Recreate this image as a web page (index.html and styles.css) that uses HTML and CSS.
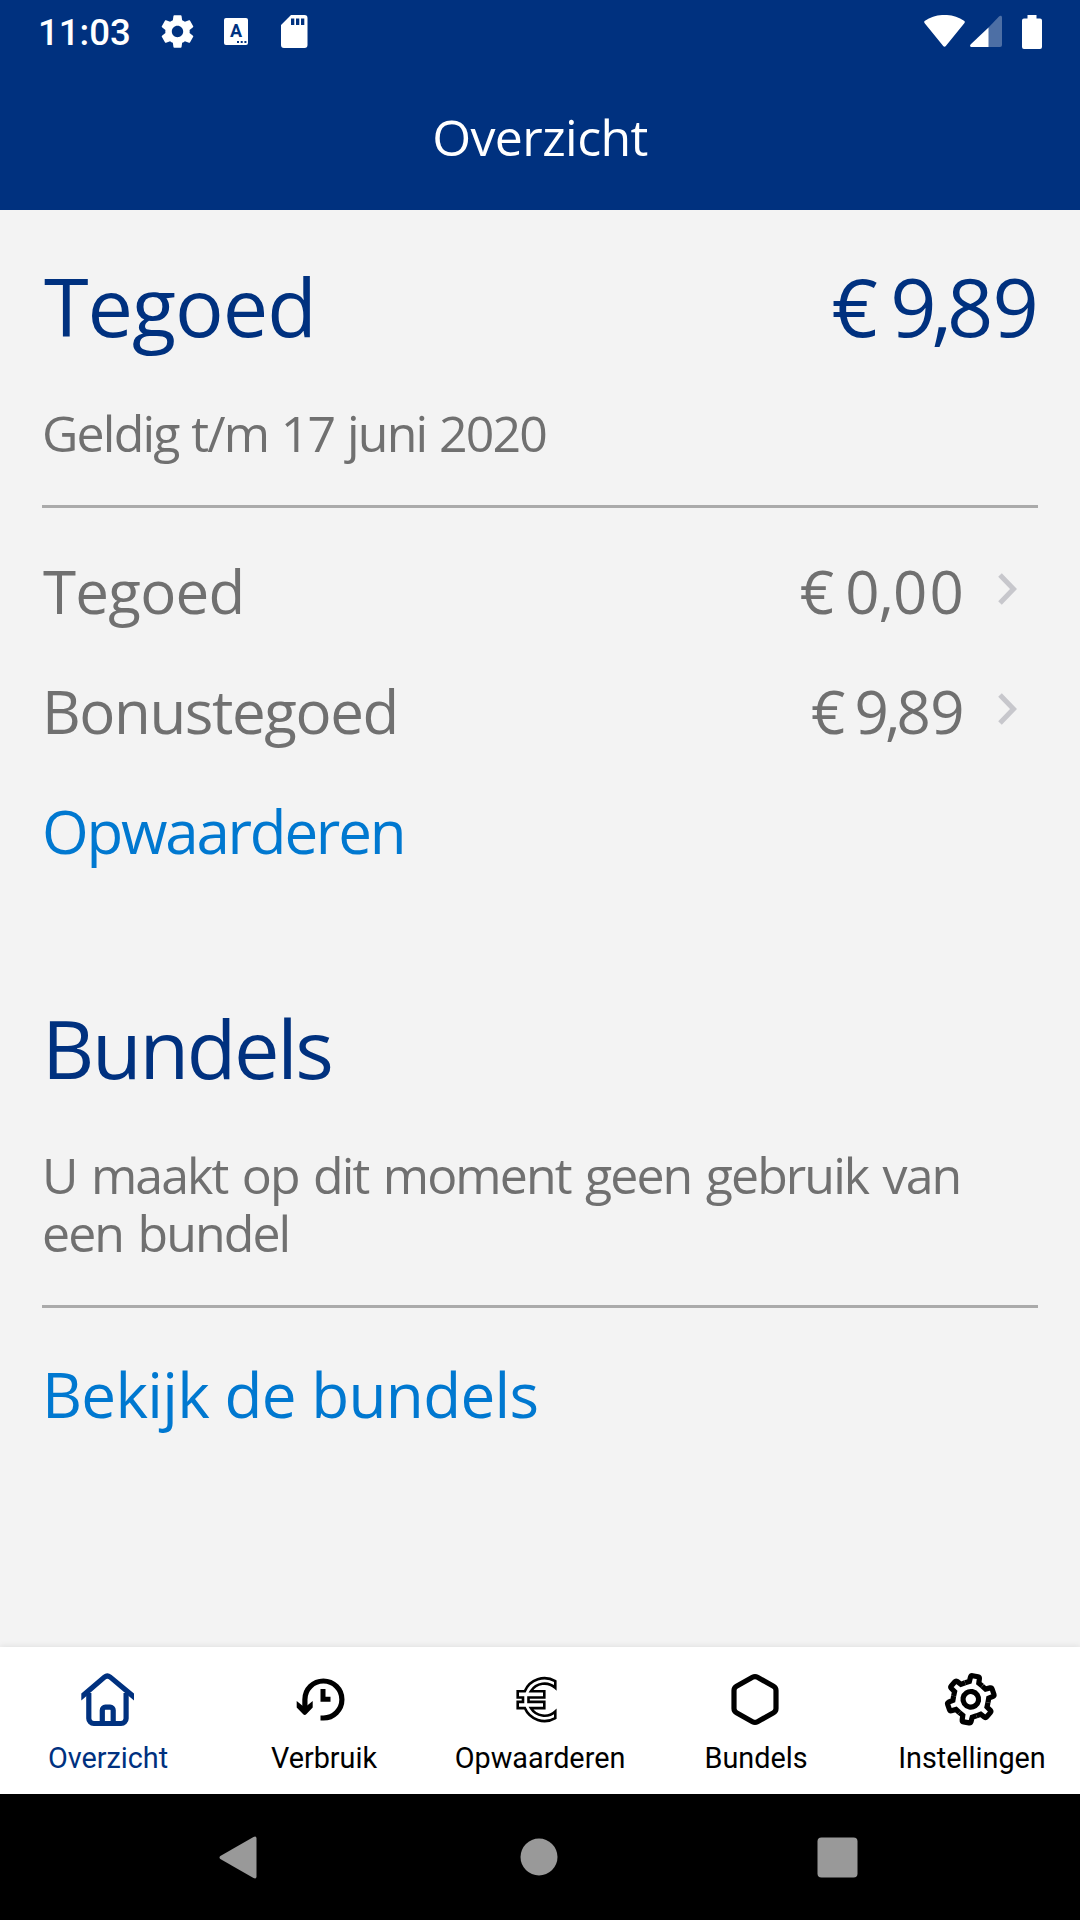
FILE: index.html
```
<!DOCTYPE html>
<html lang="nl">
<head>
    <meta charset="UTF-8">
    <meta name="viewport" content="width=device-width, initial-scale=1.0">
    <title>Overzicht</title>
    <link rel="stylesheet" href="styles.css">
</head>
<body>
    <header>
        <div class="status-bar">
            <span class="time">11:03</span>
            <svg class="status-gear" width="39" height="39" viewBox="0 0 24 24" fill="#fff">
                <path d="M19.43 12.98c.04-.32.07-.64.07-.98s-.03-.66-.07-.98l2.11-1.65c.19-.15.24-.42.12-.64l-2-3.46c-.12-.22-.39-.3-.61-.22l-2.49 1c-.52-.4-1.08-.73-1.69-.98l-.38-2.65C14.46 2.18 14.25 2 14 2h-4c-.25 0-.46.18-.49.42l-.38 2.65c-.61.25-1.17.59-1.69.98l-2.49-1c-.23-.09-.49 0-.61.22l-2 3.46c-.13.22-.07.49.12.64l2.11 1.65c-.04.32-.07.65-.07.98s.03.66.07.98l-2.11 1.65c-.19.15-.24.42-.12.64l2 3.46c.12.22.39.3.61.22l2.49-1c.52.4 1.08.73 1.69.98l.38 2.65c.03.24.24.42.49.42h4c.25 0 .46-.18.49-.42l.38-2.65c.61-.25 1.17-.59 1.69-.98l2.49 1c.23.09.49 0 .61-.22l2-3.46c.12-.22.07-.49-.12-.64l-2.11-1.65zM12 15.5c-1.93 0-3.5-1.57-3.5-3.5s1.57-3.5 3.5-3.5 3.5 1.57 3.5 3.5-1.57 3.5-3.5 3.5z"/>
            </svg>
            <svg class="status-letter" width="24" height="27" viewBox="0 0 24 27">
                <rect width="24" height="27" rx="2" fill="#fff"/>
                <text x="12" y="19" text-anchor="middle" class="letter">A</text>
                <path d="M13 23h2v2h-2zM16.7 23h2v2h-2zM20.4 23h2v2h-2z" fill="#00317f"/>
            </svg>
            <svg class="status-card" width="27" height="33" viewBox="0 0 27 33" fill="#fff">
                <path fill-rule="evenodd" d="M10 0H23.500a3 3 0 0 1 3 3V30a3 3 0 0 1-3 3H3a3 3 0 0 1-3-3V10zM10 3.500V10h3.300V3.500zM15 3.500V10h3.300V3.500zM20 3.500V10h3.300V3.500z"/>
            </svg>
            <div class="status-right">
                <svg width="41" height="33" viewBox="0 0 41 33" fill="#fff">
                    <path d="M.7 8.200C-.1 7.200 0 6.400 1 5.700 12-2 29-2 40 5.700c1 .7 1.100 1.500.3 2.500L22 30.800c-1 1.200-2 1.200-3 0z"/>
                </svg>
                <svg class="signal" width="32" height="33" viewBox="0 0 32 33" fill="#fff">
                    <path opacity=".3" d="M18 13 29 1.500c1.400-1.300 3-.8 3 1V30a2 2 0 0 1-2 2H18z"/>
                    <path d="M18.500 12.500V32H2c-2 0-2.500-1.500-1.200-2.800z"/>
                </svg>
                <svg class="battery" width="20" height="34" viewBox="0 0 20 34" fill="#fff">
                    <path d="M5.500 0h9v3.500H18a2 2 0 0 1 2 2V32a2 2 0 0 1-2 2H2a2 2 0 0 1-2-2V5.500a2 2 0 0 1 2-2h3.500z"/>
                </svg>
            </div>
        </div>
        <h1>Overzicht</h1>
    </header>

    <main>
        <section>
            <div class="title-row">
                <h2 class="credit-title">Tegoed</h2>
                <span class="amount total">€ <span class="euros">9,</span>89</span>
            </div>
            <p class="info valid">Geldig t/m 17 juni 2020</p>
            <hr>
            <div class="row">
                <span class="label-short">Tegoed</span>
                <span class="amount zero">€ <span class="euros">0,</span>00</span>
                <svg class="chevron" width="20" height="32" viewBox="0 0 20 32">
                    <path d="M2 2 15.500 16 2 30" fill="none" stroke="#c7c7cc" stroke-width="5"/>
                </svg>
            </div>
            <div class="row">
                <span class="label-long">Bonustegoed</span>
                <span class="amount">€ <span class="euros">9,</span>89</span>
                <svg class="chevron" width="20" height="32" viewBox="0 0 20 32">
                    <path d="M2 2 15.500 16 2 30" fill="none" stroke="#c7c7cc" stroke-width="5"/>
                </svg>
            </div>
            <a class="row link" href="#">Opwaarderen</a>
        </section>

        <section class="bundles">
            <h2 class="bundles-title">Bundels</h2>
            <p class="info">U maakt op dit moment geen gebruik van een bundel</p>
            <hr>
            <a class="row link link-bundles" href="#">Bekijk de bundels</a>
        </section>
    </main>

    <nav class="tab-bar">
        <a class="tab active" href="#">
            <svg viewBox="0 0 63 63">
                <path d="M5.300 25.500 27 7Q31.300 3.500 35.600 7L58 25.500V32.600L33.500 11.700Q31.400 10 29.300 11.700L5.300 32.600z" fill="currentColor"/>
                <path d="M12.800 25V50.500a5 5 0 0 0 5 5H45.100a5 5 0 0 0 5-5V25M26.300 55V42.200a3 3 0 0 1 3-3H34.200a3 3 0 0 1 3 3V55" class="line"/>
            </svg>
            <span>Overzicht</span>
        </a>
        <a class="tab" href="#">
            <svg viewBox="0 0 63 63">
                <path d="M28.500 50H31.400A18.500 18.500 0 1 0 12.900 31.500V42" class="line"/>
                <path d="M4.700 33 12.700 39.500 20.700 33V39.500L14.500 46Q12.700 47.800 11 46L4.700 39.500zM28.500 21h5v7.700h5v5h-10z" fill="currentColor"/>
            </svg>
            <span>Verbruik</span>
        </a>
        <a class="tab" href="#">
            <svg viewBox="0 0 63 63">
                <path d="M16.800 23.200A21.400 21.400 0 0 1 47.300 13.200V19.800A16 16 0 0 0 22.900 23.200H36.300V29.500H20.500V33.900H36.300V40.100H22.900A16 16 0 0 0 47.300 43.500V50.100A21.400 21.400 0 0 1 16.800 40.100H9.700V33.900H15V29.500H9.700V23.200z" class="line thin"/>
            </svg>
            <span>Opwaarderen</span>
        </a>
        <a class="tab" href="#">
            <svg viewBox="0 0 63 63">
                <path d="M28.500 9.300Q31 7.900 33.500 9.300L49.500 18.300Q52 19.700 52 22.500V40.500Q52 43.300 49.500 44.700L33.500 53.700Q31 55.100 28.500 53.700L12.500 44.700Q10 43.300 10 40.500V22.500Q10 19.700 12.500 18.300z" class="line"/>
            </svg>
            <span>Bundels</span>
        </a>
        <a class="tab" href="#">
            <svg viewBox="0 0 63 63">
                <defs>
                    <path id="tooth" d="M-8.750-15.150-4.800-17.300-4.500-22Q-4.300-23.500-2.800-23.500H2.800Q4.300-23.500 4.500-22L4.800-17.300 8.750-15.150"/>
                </defs>
                <g transform="translate(30.800 31.300) rotate(11)" class="line">
                    <circle r="7.800"/>
                    <use href="#tooth"/>
                    <use href="#tooth" transform="rotate(60)"/>
                    <use href="#tooth" transform="rotate(120)"/>
                    <use href="#tooth" transform="rotate(180)"/>
                    <use href="#tooth" transform="rotate(240)"/>
                    <use href="#tooth" transform="rotate(300)"/>
                </g>
            </svg>
            <span>Instellingen</span>
        </a>
    </nav>

    <!-- Android system buttons -->
    <div class="system-bar">
        <svg viewBox="0 0 63 63"><path d="M12.300 30 45.500 10.900Q48.500 9.500 48.500 12.500V50.500Q48.500 53.500 45.500 52.100L12.300 33Q10.700 31.500 12.300 30z"/></svg>
        <svg viewBox="0 0 63 63"><circle cx="31" cy="31" r="18.500"/></svg>
        <svg viewBox="0 0 63 63"><rect x="9.500" y="11.500" width="40" height="40" rx="4"/></svg>
    </div>
</body>
</html>
```
FILE: styles.css
```
* {
    box-sizing: border-box;
}

body {
    font-family: "Open Sans", "Noto Sans", sans-serif;
    margin: 0;
    background-color: #f3f3f3;
    color: #707070;
    display: flex;
    flex-direction: column;
    height: 1920px;
    overflow: hidden;
}

svg {
    display: block;
    flex: none;
}

a {
    text-decoration: none;
}

header {
    background-color: #00317f;
    color: #fff;
    height: 210px;
}

.status-bar {
    display: flex;
    align-items: center;
    height: 63px;
    padding: 0 38px;
}

.time {
    width: 120px;
    padding-top: 3px;
    font: 500 36.6px/1 Roboto, sans-serif;
}

.status-letter {
    margin-left: 27px;
}

.letter {
    font: bold 18px Roboto, sans-serif;
    fill: #00317f;
}

.status-card {
    margin-left: 33px;
}

.status-right {
    display: flex;
    align-items: center;
    margin-left: auto;
}

.signal {
    margin-left: 5px;
}

.battery {
    margin-left: 20px;
}

h1 {
    margin: 0;
    font-size: 50px;
    font-weight: 400;
    line-height: 149px;
    letter-spacing: -0.57px;
    text-align: center;
}

main {
    flex: 1;
    padding: 40px 42px 0;
}

.title-row {
    display: flex;
    justify-content: space-between;
    color: #00317f;
}

h2 {
    margin: 0;
    color: #00317f;
    font-size: 81px;
    font-weight: 400;
    line-height: 111px;
}

.credit-title {
    padding-left: 2px;
    letter-spacing: -1px;
}

.bundles-title {
    letter-spacing: -2.3px;
}

.amount {
    letter-spacing: -0.01em;
    word-spacing: -0.087em;
}

.euros {
    letter-spacing: -0.065em;
}

.zero {
    letter-spacing: 2.2px;
    word-spacing: -9px;
}

.zero .euros {
    letter-spacing: -1px;
}

.total {
    font-size: 81px;
    line-height: 111px;
}

.info {
    margin: 43px 0 43px;
    font-size: 50px;
    line-height: 58px;
    letter-spacing: -1.9px;
    word-spacing: 3.3px;
}

.valid {
    letter-spacing: -1.8px;
    word-spacing: 1.4px;
}

hr {
    height: 3px;
    margin: 0 0 22px;
    border: none;
    background-color: #aaa;
}

.row {
    display: flex;
    align-items: center;
    height: 120px;
    padding-top: 2px;
    font-size: 60px;
}

.row .amount {
    margin-left: auto;
}

.label-short {
    padding-left: 1px;
    letter-spacing: -0.7px;
}

.label-long {
    letter-spacing: -1.4px;
}

.chevron {
    margin: 0 20px 5px 34px;
}

.zero + .chevron {
    margin-left: 32px;
}

.link {
    color: #0078d0;
    letter-spacing: -2.2px;
}

.bundles {
    margin-top: 102px;
}

.link-bundles {
    height: 126px;
    font-size: 62px;
    letter-spacing: -0.7px;
}

.tab-bar {
    display: flex;
    height: 147px;
    padding-top: 21px;
    background-color: #fff;
    box-shadow: 0 -1px 6px rgba(0, 0, 0, 0.08);
}

.tab {
    flex: 1 1 0;
    display: flex;
    flex-direction: column;
    align-items: center;
    gap: 10px;
    color: #000;
    font: 28.8px/34px Roboto, sans-serif;
}

.tab.active {
    color: #00317f;
}

.tab svg {
    width: 63px;
    height: 63px;
    margin-right: 1px;
}

.line {
    fill: none;
    stroke: currentColor;
    stroke-width: 5.2;
}

.thin {
    stroke-width: 2.6;
}

.system-bar {
    display: flex;
    align-items: center;
    justify-content: center;
    gap: 237px;
    height: 126px;
    padding-right: 1px;
    background-color: #000;
}

.system-bar svg {
    width: 63px;
    height: 63px;
    fill: #999;
}
```
